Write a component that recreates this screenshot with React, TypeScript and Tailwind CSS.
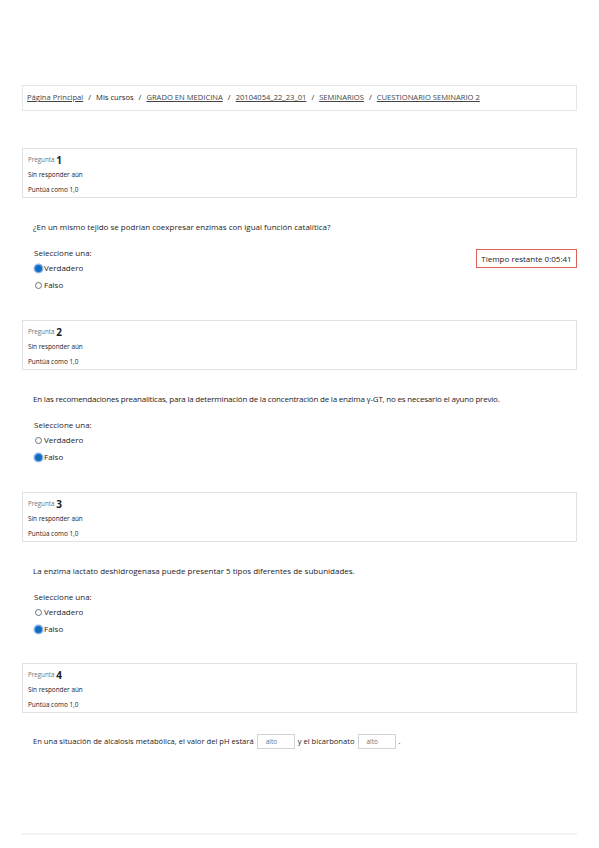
import React from "react";

function Radio({ checked }: { checked: boolean }) {
  return checked ? (
    <span className="inline-block w-[7px] h-[7px] rounded-full bg-[#0f6cbf] ring-[1.5px] ring-[#8ab4e8] mr-[2px]" />
  ) : (
    <span className="inline-block w-[7px] h-[7px] rounded-full border border-[#6a737b] bg-white mr-[2px]" />
  );
}

function InfoBox({ n }: { n: number }) {
  return (
    <div className="h-[50px] border border-[#dee2e6] pl-[5px] pt-[3px] flex flex-col">
      <div className="h-[15px] flex items-center gap-[2px]">
        <span className="text-[6.2px] text-[#6a737b]">Pregunta</span>
        <span className="text-[10px] font-bold leading-none text-[#1d2125]">{n}</span>
      </div>
      <div className="h-[15px] flex items-center text-[6.4px] text-[#1d2125]">Sin responder aún</div>
      <div className="h-[15px] flex items-center text-[6.4px] text-[#1d2125]">Puntúa como 1,0</div>
    </div>
  );
}

function TF({ text, answer, tight }: { text: string; answer: "v" | "f"; tight?: boolean }) {
  return (
    <div className="pl-[11px]">
      <div className={"mt-[23px] h-[12px] flex items-center text-[8px] " + (tight ? "tracking-[-0.2px]" : "")}>{text}</div>
      <div className="mt-[14px] h-[12px] flex items-center text-[8px] pl-[1px]">Seleccione una:</div>
      <div className="mt-[1px] h-[16px] flex items-center text-[8px] pl-[2px]">
        <Radio checked={answer === "v"} />
        Verdadero
      </div>
      <div className="h-[18px] flex items-center text-[8px] pl-[2px]">
        <Radio checked={answer === "f"} />
        Falso
      </div>
    </div>
  );
}

export default function App() {
  return (
    <div className="relative min-h-[848px] bg-white text-[#1d2125] font-['Open_Sans',sans-serif] px-[22px] pt-[85px]">
      <div className="h-[26px] border border-[#e6e6e6] flex items-center pl-[4px] text-[7.6px] text-[#1d2125] gap-[5px]">
        <span className="underline text-[#444]">Página Principal</span>
        <span>/</span>
        <span>Mis cursos</span>
        <span>/</span>
        <span className="underline text-[#444]">GRADO EN MEDICINA</span>
        <span>/</span>
        <span className="underline text-[#444]">20104054_22_23_01</span>
        <span>/</span>
        <span className="underline text-[#444]">SEMINARIOS</span>
        <span>/</span>
        <span className="underline text-[#444]">CUESTIONARIO SEMINARIO 2</span>
      </div>

      <div className="mt-[37px] flex flex-col">
        <div className="h-[172px]">
          <InfoBox n={1} />
          <TF
            text="¿En un mismo tejido se podrían coexpresar enzimas con igual función catalítica?"
            answer="v"
          />
        </div>
        <div className="h-[172px]">
          <InfoBox n={2} />
          <TF
            text="En las recomendaciones preanalíticas, para la determinación de la concentración de la enzima γ-GT, no es necesario el ayuno previo."
            answer="f"
            tight
          />
        </div>
        <div className="h-[171px]">
          <InfoBox n={3} />
          <TF
            text="La enzima lactato deshidrogenasa puede presentar 5 tipos diferentes de subunidades."
            answer="f"
          />
        </div>
        <div>
          <InfoBox n={4} />
          <div className="pl-[11px] mt-[21px] flex items-center text-[7.6px] h-[15px]">
            <span>En una situación de alcalosis metabólica, el valor del pH estará</span>
            <span className="mx-[3px] w-[38px] h-[15px] border border-[#ced4da] flex items-center pl-[8px] text-[6.5px] text-[#6a737b]">alto</span>
            <span>y el bicarbonato</span>
            <span className="mx-[3px] w-[38px] h-[15px] border border-[#ced4da] flex items-center pl-[8px] text-[6.5px] text-[#6a737b]">alto</span>
            <span>.</span>
          </div>
        </div>
      </div>

      <div className="absolute left-[22px] right-[22px] top-[833px] h-[2px] bg-[#f2f2f2]" />

      <div className="absolute left-[476px] top-[249px] w-[101px] h-[19px] border border-[#e0605a] flex items-center justify-center text-[8px] bg-white">
        Tiempo restante 0:05:41
      </div>
    </div>
  );
}
